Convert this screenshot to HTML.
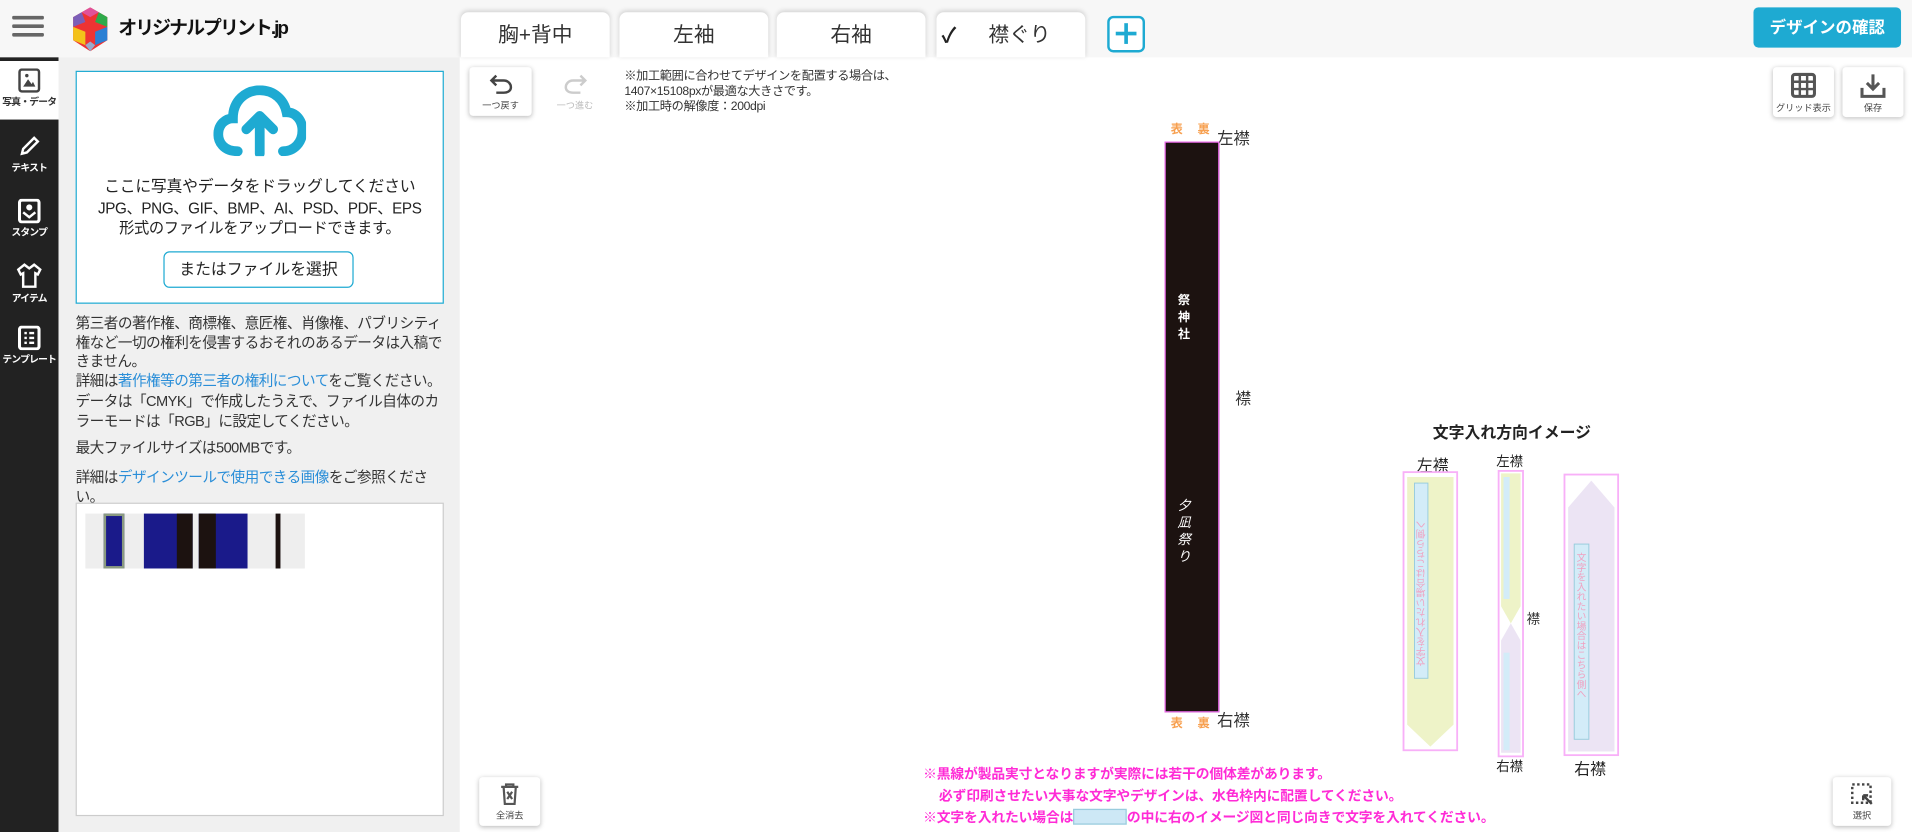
<!DOCTYPE html>
<html><head><meta charset="utf-8">
<style>
*{box-sizing:border-box;margin:0;padding:0}
html,body{width:1912px;height:832px;overflow:hidden;background:#fff}
body{font-family:"Liberation Sans","Noto Sans CJK JP",sans-serif;color:#222}
#w{position:absolute;left:0;top:0;width:1568px;height:682px;transform:scale(1.21939,1.21994);transform-origin:0 0;overflow:hidden}
.a{position:absolute}
.hdr{left:0;top:0;width:1568px;height:47px;background:#f7f7f7}
.tab{top:10px;height:37px;width:122px;background:#fff;border-radius:6px 6px 0 0;box-shadow:0 -1px 4px rgba(0,0,0,.15);font-size:17px;text-align:center;line-height:37px;color:#333}
.side{left:0;top:47px;width:48px;height:635px;background:#222}
.si{left:0;width:48px;height:52px;color:#fff;font-size:8px;letter-spacing:-.6px;white-space:nowrap;text-align:center;font-weight:bold}
.si svg{display:block;margin:6px auto 2px}
.panel{left:48px;top:47px;width:329px;height:635px;background:#f0f0f0}
.p{font-size:12px;line-height:15.5px;color:#333;left:62px;width:306px;letter-spacing:-.45px;white-space:nowrap}
.lk{color:#2a8ed8}
.btn{background:#fff;border-radius:3px;box-shadow:0 1px 4px rgba(0,0,0,.25);font-size:7.5px;text-align:center;color:#444;white-space:nowrap}
.mg{color:#ff2bd6;font-size:11.3px;font-weight:bold;letter-spacing:-.1px;white-space:nowrap}
</style></head><body><div id="w">
<div class="a hdr"></div>
<div class="a" style="left:10px;top:13px;width:26px;height:3px;background:#666;border-radius:1px"></div>
<div class="a" style="left:10px;top:20px;width:26px;height:3px;background:#666;border-radius:1px"></div>
<div class="a" style="left:10px;top:27px;width:26px;height:3px;background:#666;border-radius:1px"></div>
<svg class="a" style="left:58px;top:6px" width="32" height="36" viewBox="0 0 32 36">
<polygon points="16,0 30,8 30,27 16,36 2,27 2,8" fill="#e33"/>
<polygon points="2,8 9,4 12,12 2,16" fill="#7b5fb8"/><polygon points="23,4 30,8 30,16 20,12" fill="#2eaa4a"/>
<polygon points="2,16 12,20 12,31 2,27" fill="#f3c21a"/><polygon points="30,16 20,20 20,31 30,27" fill="#2b7fd4"/>
<polygon points="12,31 16,36 20,31 16,28" fill="#9ac"/><polygon points="9,4 16,0 23,4 16,8" fill="#e0529a"/></svg>
<div class="a" style="left:97px;top:11px;font-size:15.5px;font-weight:bold;color:#111;letter-spacing:-1.6px">オリジナルプリント.jp</div>
<div class="a tab" style="left:378px">胸+背中</div>
<div class="a tab" style="left:508px">左袖</div>
<div class="a tab" style="left:637px">右袖</div>
<div class="a tab" style="left:768px;height:37px">&nbsp;&nbsp;&nbsp;襟ぐり</div>
<div class="a" style="left:772px;top:15px;font-size:17px;font-weight:bold">✓</div>
<div class="a" style="left:908px;top:13px;width:31px;height:30px;border:2px solid #1eaad2;border-radius:5px;background:#fff"></div>
<div class="a" style="left:915px;top:26px;width:17px;height:3px;background:#1eaad2"></div>
<div class="a" style="left:922px;top:19px;width:3px;height:17px;background:#1eaad2"></div>
<div class="a" style="left:1438px;top:6px;width:121px;height:33px;background:#1eaad2;border-radius:4px;color:#fff;font-weight:bold;font-size:13.5px;text-align:center;line-height:33px">デザインの確認</div>

<div class="a side"></div>
<div class="a si" style="top:50px;background:#fff;color:#333;height:48px">
<svg width="20" height="20" viewBox="0 0 20 20"><rect x="2" y="1" width="16" height="18" rx="2" fill="none" stroke="#444" stroke-width="2"/><polygon points="5,15 9,9 12,13 13,11 15,15" fill="#444"/><circle cx="8" cy="6" r="1.4" fill="#444"/></svg>写真・データ</div>
<div class="a si" style="top:104px"><svg width="20" height="20" viewBox="0 0 20 20"><path d="M4 16 L5 12 L14 3 L17 6 L8 15 Z" fill="none" stroke="#fff" stroke-width="2"/></svg>テキスト</div>
<div class="a si" style="top:157px"><svg width="20" height="20" viewBox="0 0 20 20"><rect x="2" y="1" width="16" height="18" rx="2" fill="none" stroke="#fff" stroke-width="2.5"/><circle cx="10" cy="7" r="2.5" fill="#fff"/><path d="M5 11 L10 15 L15 11" fill="none" stroke="#fff" stroke-width="2"/></svg>スタンプ</div>
<div class="a si" style="top:209px"><svg width="22" height="22" viewBox="0 0 22 22"><path d="M7 2 L2 6 L4 10 L6 9 L6 20 L16 20 L16 9 L18 10 L20 6 L15 2 L11 5 Z" fill="none" stroke="#fff" stroke-width="2"/></svg>アイテム</div>
<div class="a si" style="top:261px"><svg width="20" height="20" viewBox="0 0 20 20"><rect x="2" y="1" width="16" height="18" rx="2" fill="none" stroke="#fff" stroke-width="2.5"/><path d="M6 6h2M10 6h4M6 10h2M10 10h4M6 14h2M10 14h4" stroke="#fff" stroke-width="2"/></svg>テンプレート</div>

<div class="a panel"></div>
<div class="a" style="left:62px;top:58px;width:302px;height:191px;background:#fff;border:1px solid #1eaad2"></div>
<svg class="a" style="left:175px;top:70px" width="76" height="58" viewBox="0 0 76 58"><path d="M20 54 C8 54 4 46 4 40 C4 32 10 27 16 27 C16 12 27 4 38 4 C50 4 58 12 60 22 C68 22 73 29 73 37 C73 47 66 54 57 54" fill="none" stroke="#1eaad2" stroke-width="8" stroke-linecap="round"/><path d="M38 56 L38 26 M27 36 L38 25 L49 36" fill="none" stroke="#1eaad2" stroke-width="8" stroke-linecap="round" stroke-linejoin="round"/></svg>
<div class="a" style="left:62px;top:142px;width:302px;text-align:center;font-size:13px;color:#222;letter-spacing:-.2px">ここに写真やデータをドラッグしてください</div>
<div class="a" style="left:62px;top:163px;width:302px;text-align:center;font-size:12.5px;line-height:16px;color:#222;letter-spacing:-.3px">JPG、PNG、GIF、BMP、AI、PSD、PDF、EPS<br>形式のファイルをアップロードできます。</div>
<div class="a" style="left:134px;top:206px;width:156px;height:30px;border:1px solid #1eaad2;border-radius:5px;background:#fff;text-align:center;line-height:28px;font-size:13px">またはファイルを選択</div>
<div class="a p" style="top:258px">第三者の著作権、商標権、意匠権、肖像権、パブリシティ<br>権など一切の権利を侵害するおそれのあるデータは入稿で<br>きません。<br>詳細は<span class="lk">著作権等の第三者の権利について</span>をご覧ください。</div>
<div class="a p" style="top:322px">データは「CMYK」で作成したうえで、ファイル自体のカ<br>ラーモードは「RGB」に設定してください。</div>
<div class="a p" style="top:360px">最大ファイルサイズは500MBです。</div>
<div class="a p" style="top:384px">詳細は<span class="lk">デザインツールで使用できる画像</span>をご参照くださ<br>い。</div>
<div class="a" style="left:62px;top:412px;width:302px;height:257px;background:#fff;border:1px solid #ccc"></div>
<div class="a" style="left:70px;top:421px;width:180px;height:45px;background:#eee"></div>
<div class="a" style="left:85px;top:421px;width:17px;height:45px;background:#1a1a8a;border:2px solid #8a9a80"></div>
<div class="a" style="left:118px;top:421px;width:40px;height:45px;background:#1a1a8a"></div><div class="a" style="left:145px;top:421px;width:13px;height:45px;background:#1c1210"></div>
<div class="a" style="left:163px;top:421px;width:40px;height:45px;background:#1a1a8a"></div><div class="a" style="left:163px;top:421px;width:14px;height:45px;background:#1c1210"></div>
<div class="a" style="left:226px;top:421px;width:4px;height:45px;background:#1c1210"></div>

<div class="a btn" style="left:385px;top:55px;width:51px;height:40px"><svg width="22" height="20" viewBox="0 0 22 20" style="margin-top:4px"><path d="M7 3 L3 7 L7 11 M3 7 H13 C17 7 19 10 19 12.5 C19 15 17 17 13 17 H7" fill="none" stroke="#444" stroke-width="2"/></svg><br>一つ戻す</div>
<div class="a btn" style="left:446px;top:55px;width:51px;height:40px;color:#bbb;box-shadow:none"><svg width="22" height="20" viewBox="0 0 22 20" style="margin-top:4px"><path d="M15 3 L19 7 L15 11 M19 7 H9 C5 7 3 10 3 12.5 C3 15 5 17 9 17 H15" fill="none" stroke="#ccc" stroke-width="2"/></svg><br>一つ進む</div>
<div class="a" style="left:512px;top:57px;font-size:10px;line-height:12.5px;color:#333;letter-spacing:-.3px">※加工範囲に合わせてデザインを配置する場合は、<br>1407×15108pxが最適な大きさです。<br>※加工時の解像度：200dpi</div>
<div class="a btn" style="left:1454px;top:55px;width:50px;height:41px"><svg width="22" height="22" viewBox="0 0 22 22" style="margin-top:4px"><rect x="2" y="2" width="18" height="18" rx="2" fill="none" stroke="#555" stroke-width="2.5"/><path d="M8 2v18M14 2v18M2 8h18M2 14h18" stroke="#555" stroke-width="2"/></svg><br>グリッド表示</div>
<div class="a btn" style="left:1511px;top:55px;width:50px;height:41px"><svg width="22" height="22" viewBox="0 0 22 22" style="margin-top:4px"><path d="M11 2v12M6 9l5 5 5-5M2 13v7h18v-7" fill="none" stroke="#555" stroke-width="2.5"/></svg><br>保存</div>

<div class="a" style="left:960px;top:97px;font-size:10px;color:#f7a050;font-weight:bold">表</div>
<div class="a" style="left:982px;top:97px;font-size:10px;color:#f7a050;font-weight:bold">裏</div>
<div class="a" style="left:998px;top:102px;font-size:13.5px;color:#333">左襟</div>
<div class="a" style="left:955px;top:116px;width:45px;height:468px;background:#1c1210;border:1.5px solid #f06cf0"></div>
<div class="a" style="left:964px;top:240px;color:#fff;font-size:10px;line-height:14px;width:14px;text-align:center;font-weight:bold">祭<br>神<br>社</div>
<div class="a" style="left:964px;top:408px;color:#fff;font-size:11px;line-height:14px;width:14px;text-align:center;font-style:italic">夕<br>凪<br>祭<br>り</div>
<div class="a" style="left:1013px;top:316px;font-size:13px;color:#333">襟</div>
<div class="a" style="left:960px;top:584px;font-size:10px;color:#f7a050;font-weight:bold">表</div>
<div class="a" style="left:982px;top:584px;font-size:10px;color:#f7a050;font-weight:bold">裏</div>
<div class="a" style="left:998px;top:579px;font-size:13.5px;color:#333">右襟</div>

<div class="a" style="left:1175px;top:344px;font-size:13px;font-weight:bold;color:#222">文字入れ方向イメージ</div>
<div class="a" style="left:1162px;top:371px;font-size:13px;color:#222">左襟</div>
<svg class="a" style="left:1150px;top:386px" width="46" height="230" viewBox="0 0 46 230"><rect x="1" y="1" width="44" height="228" fill="none" stroke="#f8b0f8" stroke-width="1.5"/><polygon points="4,5 42,5 42,208 23,226 4,208" fill="#eef3c8"/><rect x="10" y="10" width="11" height="160" fill="#d3ecf8" stroke="#9cd" stroke-width=".8"/><text x="15" y="20" font-size="8" fill="#f0a0c0" writing-mode="tb" transform="rotate(180 15 90)" font-family="Noto Sans CJK JP">文字を入れたい場合はこちら側へ</text></svg>
<div class="a" style="left:1227px;top:370px;font-size:11px;color:#222">左襟</div>
<svg class="a" style="left:1228px;top:385px" width="22" height="236" viewBox="0 0 22 236"><rect x="1" y="1" width="20" height="234" fill="none" stroke="#f8b0f8" stroke-width="1.5"/><polygon points="3,3 19,3 19,112 11,126 3,112" fill="#eef3c8"/><polygon points="3,140 11,126 19,140 19,232 3,232" fill="#ece4f4"/><rect x="5" y="6" width="5" height="100" fill="#d3ecf8"/><rect x="5" y="150" width="5" height="80" fill="#d3ecf8"/></svg>
<div class="a" style="left:1252px;top:499px;font-size:11px;color:#333">襟</div>
<div class="a" style="left:1227px;top:620px;font-size:11px;color:#222">右襟</div>
<svg class="a" style="left:1282px;top:388px" width="46" height="232" viewBox="0 0 46 232"><rect x="1" y="1" width="44" height="230" fill="none" stroke="#f8b0f8" stroke-width="1.5"/><polygon points="4,28 23,6 42,28 42,228 4,228" fill="#ece4f4"/><rect x="9" y="58" width="12" height="160" fill="#d3ecf8" stroke="#9cd" stroke-width=".8"/><text x="15" y="65" font-size="8" fill="#f0a0c0" writing-mode="tb" font-family="Noto Sans CJK JP">文字を入れたい場合はこちら側へ</text></svg>
<div class="a" style="left:1291px;top:620px;font-size:13px;color:#222">右襟</div>

<div class="a mg" style="left:757px;top:626px">※黒線が製品実寸となりますが実際には若干の個体差があります。</div>
<div class="a mg" style="left:770px;top:644px">必ず印刷させたい大事な文字やデザインは、水色枠内に配置してください。</div>
<div class="a mg" style="left:757px;top:662px">※文字を入れたい場合は<span style="display:inline-block;width:44px;height:13px;background:#cde8f6;border:1px solid #9cd;vertical-align:-2px"></span>の中に右のイメージ図と同じ向きで文字を入れてください。</div>

<div class="a btn" style="left:393px;top:637px;width:50px;height:40px"><svg width="18" height="20" viewBox="0 0 18 20" style="margin-top:4px"><path d="M2 4h14M6 4V2h6v2M4 4l1 14h8l1-14M7 8l4 6M11 8l-4 6" fill="none" stroke="#555" stroke-width="1.8"/></svg><br>全消去</div>
<div class="a btn" style="left:1503px;top:637px;width:48px;height:40px"><svg width="20" height="20" viewBox="0 0 20 20" style="margin-top:4px"><rect x="2" y="2" width="15" height="15" fill="none" stroke="#444" stroke-width="2" stroke-dasharray="2 2"/><path d="M11 11l7 7M11 11v4M11 11h4" stroke="#444" stroke-width="2"/></svg><br>選択</div>
</div></body></html>
